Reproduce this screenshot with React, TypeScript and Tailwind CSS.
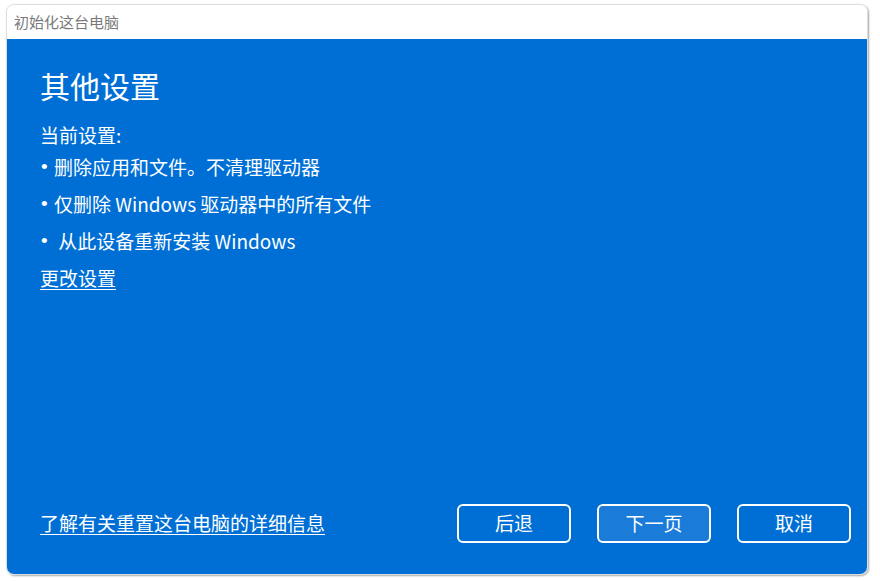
import React from 'react';

const items = ['删除应用和文件。不清理驱动器', '仅删除 Windows 驱动器中的所有文件', '\u00a0从此设备重新安装 Windows'];

export default function App() {
  return (
    <div className="w-[880px] h-[581px] bg-white pt-[4px] pl-[6px] font-['Noto_Sans_CJK_SC','Noto_Sans',sans-serif]">
      <div className="w-[862px] h-[571px] flex flex-col rounded-lg overflow-hidden border border-[#dcdcdc] shadow-[1px_1px_2px_rgba(0,0,0,0.35)]">
        <div className="h-[34px] flex-none bg-white flex items-center pl-[7px] text-[15px] text-[#7a7a7a]">
          初始化这台电脑
        </div>
        <div className="flex-1 bg-[#006fd5] text-white flex flex-col pl-[33px] pr-[16px] pt-[26px] pb-[31px]">
          <h1 className="text-[30px] leading-[40px] mb-[16px]">其他设置</h1>
          <div className="text-[19px] h-[28px] leading-[28px]">当前设置:</div>
          {items.map((t) => (
            <div key={t} className="text-[19px] h-[37px] flex items-center">
              <span className="w-[14px] shrink-0 pl-[1px] font-['Liberation_Sans',sans-serif] text-[19px]">•</span>
              <span>{t}</span>
            </div>
          ))}
          <div className="text-[19px] h-[37px] flex items-center">
            <a className="underline underline-offset-[3px] decoration-1 cursor-pointer">更改设置</a>
          </div>
          <div className="flex-1" />
          <div className="flex items-center">
            <a className="text-[19px] underline underline-offset-[3px] decoration-1 cursor-pointer">了解有关重置这台电脑的详细信息</a>
            <div className="flex-1" />
            <div className="flex gap-[26px]">
              <button className="w-[114px] h-[39px] rounded-md border-2 border-white text-[19px]">后退</button>
              <button className="w-[114px] h-[39px] rounded-md border-2 border-white bg-[#1a7bd9] text-[19px]">下一页</button>
              <button className="w-[114px] h-[39px] rounded-md border-2 border-white text-[19px]">取消</button>
            </div>
          </div>
        </div>
      </div>
    </div>
  );
}
